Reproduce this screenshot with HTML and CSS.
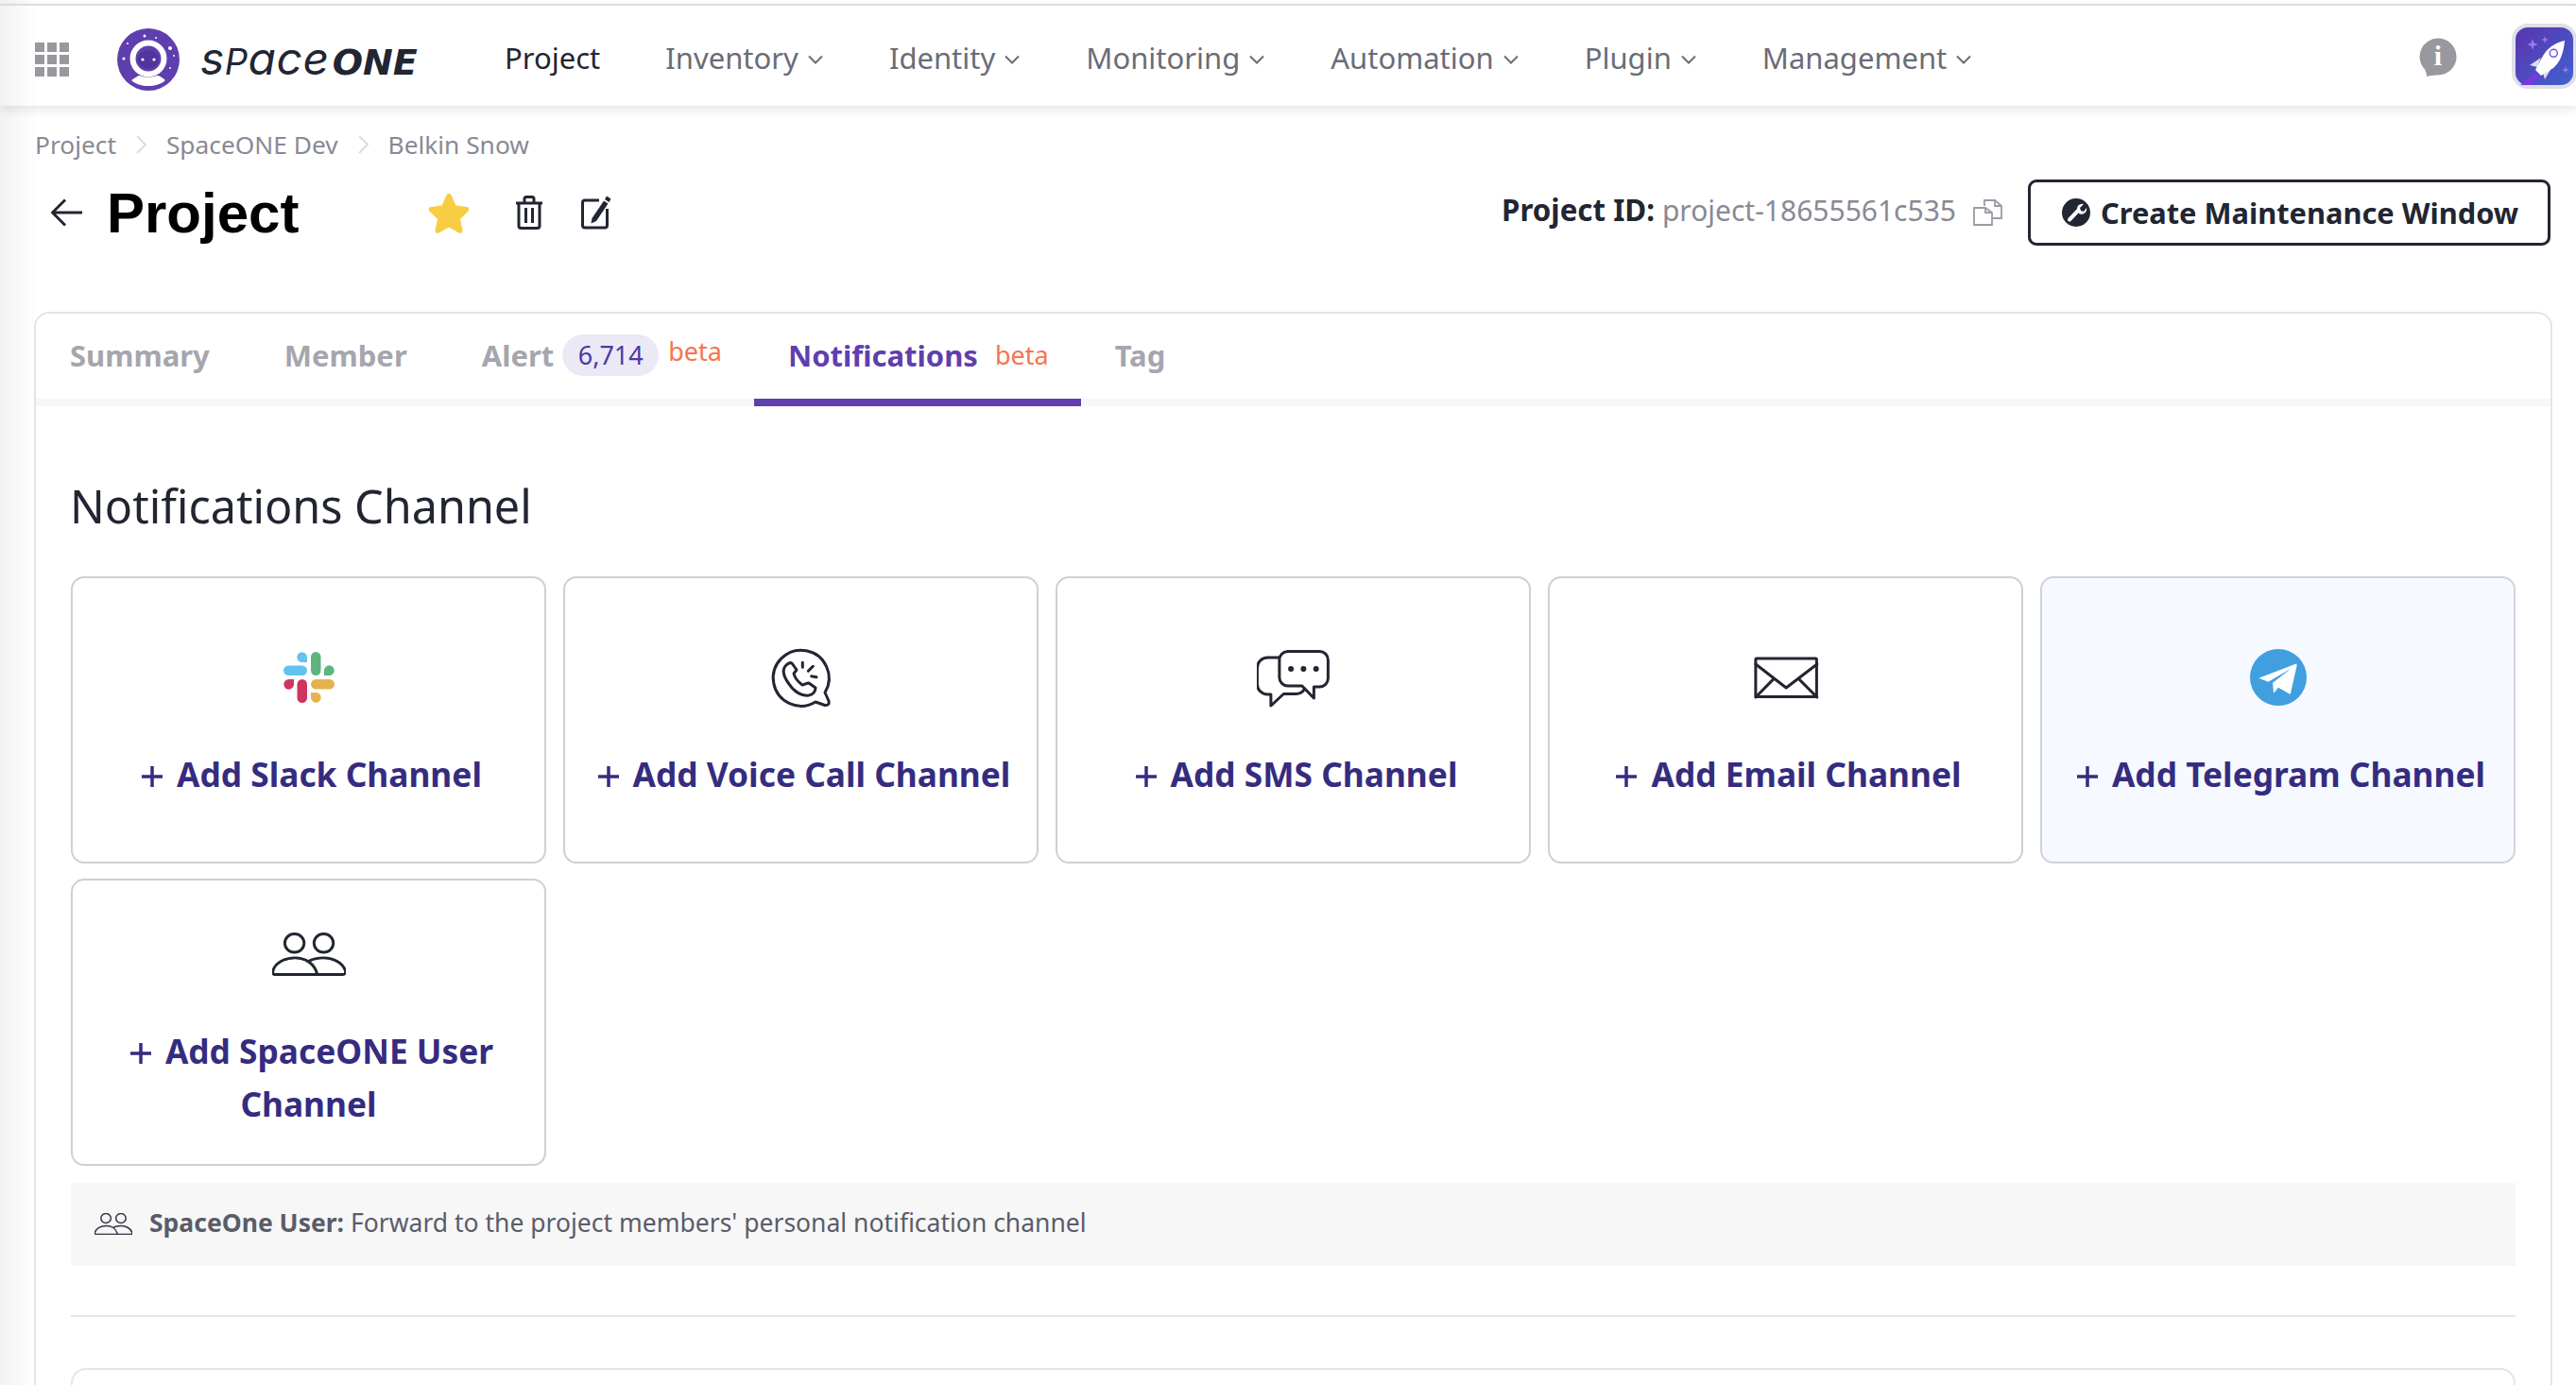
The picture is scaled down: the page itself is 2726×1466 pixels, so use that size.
FILE: index.html
```html
<!DOCTYPE html>
<html lang="en">
<head>
    <meta charset="UTF-8">
    <meta name="viewport" content="width=device-width, initial-scale=1.0">
    <title>Project - SpaceONE</title>
    <link rel="stylesheet" href="styles.css">
</head>
<body>
    <header class="topbar">
        <svg class="grid-icon" viewBox="0 0 36 36" width="36" height="36">
            <rect x="0" y="0" width="10" height="10"/><rect x="13" y="0" width="10" height="10"/><rect x="26" y="0" width="10" height="10"/>
            <rect x="0" y="13" width="10" height="10"/><rect x="13" y="13" width="10" height="10"/><rect x="26" y="13" width="10" height="10"/>
            <rect x="0" y="26" width="10" height="10"/><rect x="13" y="26" width="10" height="10"/><rect x="26" y="26" width="10" height="10"/>
        </svg>
        <svg class="logo-icon" viewBox="0 0 66 66" width="66" height="66">
            <circle cx="33" cy="33" r="33" fill="#5f3fad"/>
            <circle cx="33" cy="32" r="16.500" fill="#5f3fad" stroke="#fff" stroke-width="6"/>
            <ellipse cx="33" cy="33" rx="11" ry="10" fill="#52349c"/>
            <circle cx="27" cy="33" r="1.600" fill="#fff"/>
            <circle cx="39" cy="33" r="1.600" fill="#fff"/>
            <path d="M15 55 C19 52 22 50 24 50 C29 52 37 52 42 50 C45 50 48 52 51 55 C42 63 24 63 15 55Z" fill="#fff"/>
            <g fill="#fff">
                <circle cx="29" cy="8" r="1.500"/><circle cx="41" cy="10" r="1"/><circle cx="11" cy="16" r="1"/>
                <circle cx="56" cy="21" r="2"/><circle cx="7" cy="32" r="1.500"/><circle cx="60" cy="29" r="1"/><circle cx="56" cy="42" r="1"/>
            </g>
        </svg>
        <div class="wordmark"><span class="wordmark-thin">s<span class="wordmark-cap">P</span>ace</span><span class="wordmark-bold">ONE</span></div>
        <nav class="nav">
            <a class="nav-item nav-item-active">Project</a>
            <a class="nav-item">Inventory <svg class="chevron" viewBox="0 0 18 10" width="18" height="10"><path d="M2 1.500 L9 8.500 L16 1.500"/></svg></a>
            <a class="nav-item">Identity <svg class="chevron" viewBox="0 0 18 10" width="18" height="10"><path d="M2 1.500 L9 8.500 L16 1.500"/></svg></a>
            <a class="nav-item">Monitoring <svg class="chevron" viewBox="0 0 18 10" width="18" height="10"><path d="M2 1.500 L9 8.500 L16 1.500"/></svg></a>
            <a class="nav-item">Automation <svg class="chevron" viewBox="0 0 18 10" width="18" height="10"><path d="M2 1.500 L9 8.500 L16 1.500"/></svg></a>
            <a class="nav-item">Plugin <svg class="chevron" viewBox="0 0 18 10" width="18" height="10"><path d="M2 1.500 L9 8.500 L16 1.500"/></svg></a>
            <a class="nav-item">Management <svg class="chevron" viewBox="0 0 18 10" width="18" height="10"><path d="M2 1.500 L9 8.500 L16 1.500"/></svg></a>
        </nav>
        <svg class="info-icon" viewBox="0 0 40 42" width="40" height="42">
            <path d="M20 0.500 A19.500 19.500 0 1 1 20 39.500 C16 39.500 13 40 8 41 C8 38 7 36 6 33.500 A19.500 19.500 0 0 1 20 0.500Z" fill="#98999e"/>
            <text class="info-letter" x="20" y="29" text-anchor="middle">i</text>
        </svg>
        <div class="rocket-tile">
            <svg viewBox="0 0 69 69" width="69" height="69">
                <defs>
                    <linearGradient id="rocketBg" x1="0" y1="0" x2="1" y2="1">
                        <stop offset="0" stop-color="#5c32ae"/>
                        <stop offset="1" stop-color="#3f63d0"/>
                    </linearGradient>
                </defs>
                <rect x="2" y="2" width="65" height="65" rx="15" fill="url(#rocketBg)" stroke="#dfdfe8" stroke-width="4"/>
                <path d="M25 52 L9 65 H20 L30 56Z" fill="#7a38e0"/>
                <path d="M31 36 L19 44 L27 46Z" fill="#dcdcf0"/>
                <path d="M42 47 L35 59 L33 52Z" fill="#dcdcf0"/>
                <path d="M56 18 C46 20 37 26 32 36 L25 49 L31 55 L44 47 C52 40 55 30 56 18Z" fill="#fff"/>
                <circle cx="44.300" cy="31.300" r="4" fill="none" stroke="#7a50e8" stroke-width="1.500"/>
                <g fill="#9a78f0">
                    <path d="M22 16 L23.500 20.500 L28 22 L23.500 23.500 L22 28 L20.500 23.500 L16 22 L20.500 20.500Z"/>
                    <path d="M35 13 L36 16 L39 17 L36 18 L35 21 L34 18 L31 17 L34 16Z"/>
                    <path d="M57 45 L58 48 L61 49 L58 50 L57 53 L56 50 L53 49 L56 48Z"/>
                </g>
            </svg>
        </div>
    </header>

    <main class="page">
        <div class="breadcrumb">
            <span>Project</span>
            <svg class="crumb-sep" viewBox="0 0 13 22" width="13" height="22"><path d="M2 2 L11 11 L2 20"/></svg>
            <span>SpaceONE Dev</span>
            <svg class="crumb-sep" viewBox="0 0 13 22" width="13" height="22"><path d="M2 2 L11 11 L2 20"/></svg>
            <span>Belkin Snow</span>
        </div>

        <div class="title-row">
            <svg class="back-icon" viewBox="0 0 34 30" width="34" height="30"><path d="M33 15 H2 M15 1.500 L1.500 15 L15 28.500"/></svg>
            <h1 class="title">Project</h1>
            <svg class="star-icon" viewBox="0 0 44 44" width="44" height="44"><path d="M22 1.500 C23 1.500 24 2.500 24.500 3.500 L29.500 14.500 L41 16 C43.500 16.500 44 19 42.500 20.500 L34 29 L36.500 40.500 C37 43 34.500 44.500 32.500 43.500 L22 37.500 L11.500 43.500 C9.500 44.500 7 43 7.500 40.500 L10 29 L1.500 20.500 C0 19 0.500 16.500 3 16 L14.500 14.500 L19.500 3.500 C20 2.500 21 1.500 22 1.500Z"/></svg>
            <svg class="trash-icon" viewBox="0 0 30 36" width="30" height="36">
                <path d="M1 8 H29 M10 7 V3.500 Q10 1.500 12 1.500 H18 Q20 1.500 20 3.500 V7 M4 8 V32 Q4 34.500 6.500 34.500 H23.500 Q26 34.500 26 32 V8 M11.500 13 V29 M18.500 13 V29"/>
            </svg>
            <svg class="edit-icon" viewBox="0 0 32 36" width="32" height="36">
                <path class="edit-frame" d="M19 5 H4 Q1.500 5 1.500 7.500 V31.500 Q1.500 34 4 34 H25 Q27.500 34 27.500 31.500 V14"/>
                <path class="edit-pen" d="M27 0.500 L31.500 3.500 L29.500 7 L25 4Z M24 5.500 L28.500 8.500 L16 27 L10.500 29.500 L11.500 24Z"/>
            </svg>
            <div class="title-right">
                <span class="project-id"><b>Project ID:</b> <span class="project-id-value">project-18655561c535</span></span>
                <svg class="copy-icon" viewBox="0 0 31 28" width="31" height="28">
                    <path d="M12 7 V1 H23 L30 7 V20 H21 M23 1 V7 H30"/>
                    <path d="M1 9 H13 L20 14 V27 H1Z M13 9 V14 H20"/>
                </svg>
                <button class="maint-btn">
                    <svg viewBox="-15 -15 30 30" width="30" height="30">
                        <circle r="15" fill="#222532"/>
                        <path d="M-7 7.500 L2 -2" stroke="#fff" stroke-width="4" stroke-linecap="round"/>
                        <path d="M1 -3 A5.500 5.500 0 0 1 8 -9 L4 -5 L5 -2 L8 -1 L11 -5 A5.500 5.500 0 0 1 3 1Z" fill="#fff"/>
                    </svg>
                    Create Maintenance Window
                </button>
            </div>
        </div>

        <section class="panel">
            <div class="tabs">
                <div class="tab">Summary</div>
                <div class="tab">Member</div>
                <div class="tab tab-beta">Alert <span class="tab-count">6,714</span><span class="beta beta-raised">beta</span></div>
                <div class="tab tab-beta tab-active">Notifications <span class="beta">beta</span></div>
                <div class="tab">Tag</div>
            </div>

            <div class="panel-body">
                <h2 class="section-title">Notifications Channel</h2>
                <div class="channel-grid">
                    <div class="channel-card">
                        <svg class="channel-icon" viewBox="-39 -39 78 78">
                            <g fill="#62c3ef">
                                <rect x="-27" y="-12.500" width="25" height="10.500" rx="5.250"/>
                                <path d="M-2 -16 H-7.300 A5.350 5.350 0 1 1 -2 -21.300Z"/>
                            </g>
                            <g fill="#5cb57f">
                                <rect x="2" y="-27" width="10.500" height="25" rx="5.250"/>
                                <path d="M16 -2 V-7.300 A5.350 5.350 0 1 1 21.300 -2Z"/>
                            </g>
                            <g fill="#cf3560">
                                <rect x="-12.500" y="2" width="10.500" height="25" rx="5.250"/>
                                <path d="M-16 2 V7.300 A5.350 5.350 0 1 1 -21.300 2Z"/>
                            </g>
                            <g fill="#e7b24d">
                                <rect x="2" y="2" width="25" height="10.500" rx="5.250"/>
                                <path d="M2 16 H7.300 A5.350 5.350 0 1 1 2 21.300Z"/>
                            </g>
                        </svg>
                        <div class="channel-label"><svg class="plus" viewBox="0 0 22 22" width="22" height="22"><path d="M11 0 V22 M0 11 H22"/></svg>Add Slack Channel</div>
                    </div>
                    <div class="channel-card">
                        <svg class="channel-icon line-icon" viewBox="-39 -39 78 78">
                            <path d="M25 16 A29.500 29.500 0 1 0 15 26 L25 29.500 Q30 30 29 25Z"/>
                            <path d="M-16 -13 C-21 -8 -19 -1 -13 7 C-8 15 0 20 8 19 C13 18 15 14 15 11 L8 6 C5 6 3 8 1 8 C-3 5 -7 0 -8 -4 C-7 -6 -5 -7 -5 -8 L-10 -15 C-12 -16 -14 -15 -16 -13Z"/>
                            <path d="M1.300 -15.700 V-10.700 M12.300 -11.700 L7.300 -6.700 M10.700 -1.300 L16 -0.300"/>
                        </svg>
                        <div class="channel-label"><svg class="plus" viewBox="0 0 22 22" width="22" height="22"><path d="M11 0 V22 M0 11 H22"/></svg>Add Voice Call Channel</div>
                    </div>
                    <div class="channel-card">
                        <svg class="channel-icon line-icon" viewBox="39.600 17 78 78">
                            <path d="M72 28.500 H106 A9 9 0 0 1 115 37.500 V57 A9 9 0 0 1 106 66 H100 V78 L87.500 65 H72.500 A9 9 0 0 1 63.500 56 V37.500 A9 9 0 0 1 72 28.500Z"/>
                            <path d="M63.500 35 H51 A11 11 0 0 0 40 46 V63 A11 11 0 0 0 51 74 H54.500 V86 L68 73.500 H81 Q87 73.500 90 68.500"/>
                            <circle class="dot" cx="75.700" cy="47" r="3"/>
                            <circle class="dot" cx="89" cy="47" r="3"/>
                            <circle class="dot" cx="102.300" cy="47" r="3"/>
                        </svg>
                        <div class="channel-label"><svg class="plus" viewBox="0 0 22 22" width="22" height="22"><path d="M11 0 V22 M0 11 H22"/></svg>Add SMS Channel</div>
                    </div>
                    <div class="channel-card">
                        <svg class="channel-icon line-icon" viewBox="39.800 16.700 78 78">
                            <rect x="46.700" y="35.700" width="64.500" height="40.500" rx="1"/>
                            <path d="M46.700 41.700 L79 66.700 L111.700 41.700 M46.700 76.700 L65.700 57.300 M111.700 76.700 L92.300 57.300"/>
                        </svg>
                        <div class="channel-label"><svg class="plus" viewBox="0 0 22 22" width="22" height="22"><path d="M11 0 V22 M0 11 H22"/></svg>Add Email Channel</div>
                    </div>
                    <div class="channel-card channel-card-hover">
                        <svg class="channel-icon" viewBox="-39 -39 78 78">
                            <circle r="30" fill="#419fe0"/>
                            <path d="M-20.700 0.700 L18.300 -14.300 Q20 -15 19.500 -12 L12.700 18 L0 10.700 L-5 16.700 L-6 5.700 L13.300 -9.300 L-10.700 4.700Z" fill="#fff"/>
                        </svg>
                        <div class="channel-label"><svg class="plus" viewBox="0 0 22 22" width="22" height="22"><path d="M11 0 V22 M0 11 H22"/></svg>Add Telegram Channel</div>
                    </div>
                    <div class="channel-card channel-card-tall">
                        <svg class="channel-icon line-icon" viewBox="-40 -39 80 78">
                            <ellipse cx="-15.800" cy="-12" rx="10.500" ry="10"/>
                            <ellipse cx="15.900" cy="-12" rx="10.500" ry="10"/>
                            <path d="M-37 22 Q-40 22 -39 18 C-37 9 -26 4 -15 4 C-4 4 6 10 9 22Z"/>
                            <path d="M-1 8 C4 5 10 4 16 4 C27 4 37 10 39.500 18 Q40 22 37 22 H9"/>
                        </svg>
                        <div class="channel-label"><svg class="plus" viewBox="0 0 22 22" width="22" height="22"><path d="M11 0 V22 M0 11 H22"/></svg>Add SpaceONE User Channel</div>
                    </div>
                </div>

                <div class="info-bar">
                    <svg class="info-bar-icon" viewBox="-40 -23 80 46" width="40" height="23">
                        <ellipse cx="-15.800" cy="-12" rx="10.500" ry="10"/>
                        <ellipse cx="15.900" cy="-12" rx="10.500" ry="10"/>
                        <path d="M-37 22 Q-40 22 -39 18 C-37 9 -26 4 -15 4 C-4 4 6 10 9 22Z"/>
                        <path d="M-1 8 C4 5 10 4 16 4 C27 4 37 10 39.500 18 Q40 22 37 22 H9"/>
                    </svg>
                    <span><b>SpaceOne User:</b> Forward to the project members' personal notification channel</span>
                </div>

                <hr class="divider">
                <div class="next-card"></div>
            </div>
        </section>
    </main>
</body>
</html>
```

FILE: styles.css
```css
* {
    box-sizing: border-box;
}
html, body {
    height: 100%;
}
body {
    margin: 0;
    overflow: hidden;
    font-family: "Noto Sans", sans-serif;
    color: #222532;
    background: linear-gradient(to right, #f2f2f2, #fff 40px);
}

/* top bar */
.topbar {
    display: flex;
    align-items: center;
    height: 108px;
    margin-top: 4px;
    padding-left: 37px;
    border-top: 2px solid #dcdce0;
    box-shadow: 0 4px 10px rgba(0,0,0,0.1);
}
.grid-icon {
    fill: #98999e;
    margin-top: 8px;
}
.logo-icon {
    margin: 8px 0 0 51px;
}
.wordmark {
    display: flex;
    align-items: baseline;
    margin: 6px 0 0 22px;
    width: 232px;
    font-family: Inter, sans-serif;
    font-style: italic;
    line-height: 1;
    color: #222532;
}
.wordmark-thin {
    font-size: 48px;
    font-weight: 400;
    letter-spacing: 0.5px;
}
.wordmark-cap {
    font-size: 38px;
}
.wordmark-bold {
    margin-left: 3px;
    font-family: "DejaVu Sans", sans-serif;
    font-size: 38px;
    font-weight: 700;
}
.nav {
    display: flex;
    align-items: center;
    gap: 69px;
    margin: 4px 0 0 90px;
}
.nav-item {
    display: flex;
    align-items: center;
    gap: 9px;
    font-size: 31px;
    color: #6a6c77;
}
.nav-item-active {
    color: #222532;
}
.chevron {
    fill: none;
    stroke: #6a6c77;
    stroke-width: 2;
    margin-top: 4px;
}
.info-icon {
    margin: 4px 58px 0 auto;
}
.info-letter {
    font-family: "Liberation Serif", serif;
    font-weight: 700;
    font-size: 30px;
    fill: #fff;
}
.rocket-tile {
    height: 69px;
    width: 68px;
    overflow: hidden;
}

/* page head */
.page {
    padding: 0 25px 0 37px;
}
.breadcrumb {
    display: flex;
    align-items: center;
    gap: 20px;
    height: 40px;
    margin-top: 21px;
    font-size: 26.300px;
    color: #898995;
}
.crumb-sep {
    fill: none;
    stroke: #dcdce4;
    stroke-width: 2;
}
.title-row {
    display: flex;
    align-items: center;
    height: 69px;
    margin-top: 17px;
    padding: 0 2px 0 17px;
}
.back-icon {
    fill: none;
    stroke: #222532;
    stroke-width: 3;
}
.title {
    margin: 2px 0 0 25px;
    font-family: "Liberation Sans", sans-serif;
    font-size: 60px;
    font-weight: 700;
    color: #000;
}
.star-icon {
    margin-left: 137px;
    fill: #f8cd44;
}
.trash-icon {
    margin-left: 48px;
    fill: none;
    stroke: #222532;
    stroke-width: 3;
}
.edit-icon {
    margin-left: 40px;
}
.edit-frame {
    fill: none;
    stroke: #222532;
    stroke-width: 3;
}
.edit-pen {
    fill: #222532;
}
.title-right {
    display: flex;
    align-items: center;
    margin-left: auto;
}
.project-id {
    font-size: 30px;
    margin-top: -6px;
}
.project-id b {
    font-size: 31.300px;
    font-weight: 700;
}
.project-id-value {
    color: #898995;
}
.copy-icon {
    margin-left: 18px;
    fill: none;
    stroke: #9b9ca5;
    stroke-width: 1.800;
}
.maint-btn {
    display: flex;
    align-items: center;
    gap: 11px;
    height: 70px;
    width: 553px;
    margin-left: 27px;
    padding: 0 0 0 33px;
    background: #fff;
    border: 3px solid #222532;
    border-radius: 9px;
    font-family: inherit;
    font-size: 30.800px;
    font-weight: 700;
    color: #222532;
}

/* main panel */
.panel {
    height: 1300px;
    margin: 71px 0 0 -1px;
    border: 2px solid #e5e5e8;
    border-radius: 16px;
}
.tabs {
    display: flex;
    height: 98px;
    border-bottom: 8px solid #f7f7f7;
}
.tab {
    display: flex;
    align-items: center;
    height: 98px;
    margin-bottom: -8px;
    padding: 0 43px 3px 36px;
    border-bottom: 8px solid transparent;
    font-size: 31px;
    font-weight: 700;
    color: #a5a6ae;
}
.tab-beta {
    padding: 0 34px 3px 36px;
}
.tab-active {
    color: #5f3fad;
    border-bottom-color: #5f3fad;
}
.tab-count {
    height: 44px;
    margin-left: 9px;
    padding: 0 16.500px;
    border-radius: 22px;
    background: #ebe9f6;
    color: #4c3a9e;
    font-size: 27px;
    font-weight: 400;
    line-height: 44px;
}
.beta {
    margin-left: 18px;
    font-size: 27px;
    font-weight: 400;
    color: #f6744f;
}
.beta-raised {
    margin: -8px 0 0 10px;
}
.panel-body {
    padding: 0 37px 0 37px;
}
.section-title {
    margin: 69px 0 39px -1px;
    font-size: 48.500px;
    font-weight: 400;
    line-height: 72px;
    color: #222532;
}
.channel-grid {
    display: grid;
    grid-template-columns: repeat(5, 1fr);
    grid-auto-rows: 304px;
    gap: 16px 18px;
}
.channel-card {
    display: flex;
    flex-direction: column;
    align-items: center;
    justify-content: center;
    gap: 35px;
    padding: 0 20px;
    border: 2px solid #cfcfd6;
    border-radius: 14px;
}
.channel-card-hover {
    background: #f6f9ff;
    border-color: #cfd3dc;
}
.channel-card-tall {
    padding-top: 3px;
}
.channel-icon {
    width: 78px;
    height: 78px;
    flex: none;
}
.line-icon {
    fill: none;
    stroke: #222532;
    stroke-width: 3;
    stroke-linejoin: round;
    stroke-linecap: round;
}
.line-icon .dot {
    fill: #222532;
    stroke: none;
}
.channel-label {
    font-size: 35.300px;
    font-weight: 700;
    line-height: 56px;
    text-align: center;
    color: #352c80;
}
.plus {
    margin: 0 15px 0 7px;
    fill: none;
    stroke: #352c80;
    stroke-width: 3.500;
}
.info-bar {
    display: flex;
    align-items: center;
    gap: 18px;
    height: 88px;
    margin-top: 18px;
    padding: 0 0 4px 25px;
    background: #f7f7f7;
    font-size: 26.500px;
    color: #5a5c69;
}
.info-bar-icon {
    fill: none;
    stroke: #333644;
    stroke-width: 3;
    margin-top: 3px;
}
.divider {
    height: 2px;
    margin: 52px 0 0;
    border: 0;
    background: #e5e5e8;
}
.next-card {
    height: 200px;
    margin-top: 54px;
    border: 2px solid #e5e5e8;
    border-radius: 16px;
}
```
